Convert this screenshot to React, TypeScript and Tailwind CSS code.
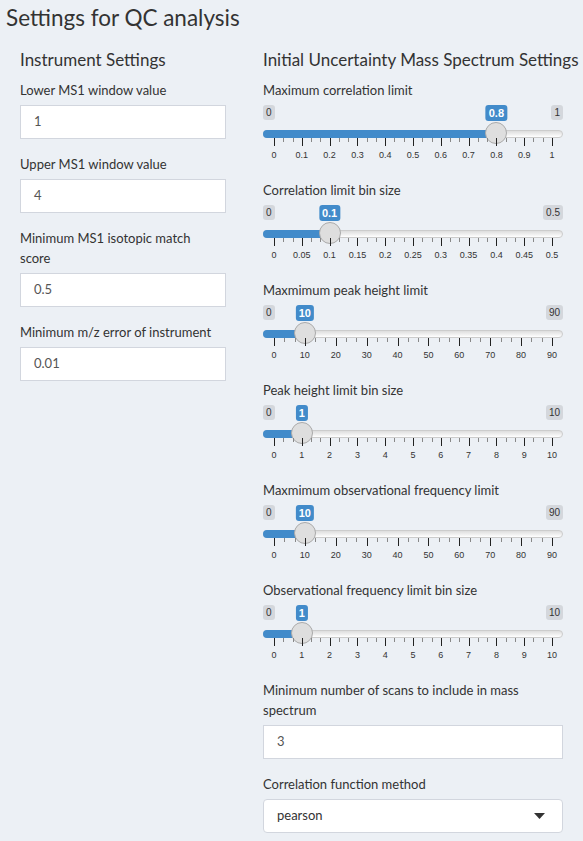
import React from "react";

interface SliderProps {
  label: string;
  min: number;
  max: number;
  value: number;
  ticks: string[];
}

const SliderInput: React.FC<SliderProps> = ({ label, min, max, value, ticks }) => {
  const frac = (value - min) / (max - min);
  const intervals = ticks.length - 1;
  const smalls: number[] = [];
  for (let i = 0; i < intervals; i++) {
    smalls.push((i + 1 / 3) / intervals);
    smalls.push((i + 2 / 3) / intervals);
  }

  return (
    <div className="mb-[15px]">
      <div className="text-[13px] leading-[20px] mb-[5px]">{label}</div>
      <div className="relative h-[60px] flex flex-col font-['Liberation_Sans',Arial,sans-serif]">
        {/* min / max labels */}
        <div className="flex justify-between text-[10px] leading-[13px] text-[#333]">
          <span className="px-[3px] py-[1px] rounded-[3px] bg-[rgba(0,0,0,0.1)]">{min}</span>
          <span className="px-[3px] py-[1px] rounded-[3px] bg-[rgba(0,0,0,0.1)]">{max}</span>
        </div>
        {/* track */}
        <div className="relative mt-[10px] h-[8px] rounded-full border border-[#ccc] bg-gradient-to-b from-[#ddd] to-white">
          <div
            className="absolute -left-px -top-px h-[8px] rounded-l-full bg-[#428bca]"
            style={{ width: 11 + frac * 278 }}
          />
          <div
            className="absolute -top-[9px] w-[22px] h-[22px] rounded-full border border-[#aaa] bg-[#dedede]"
            style={{ left: frac * 278 - 1 }}
          />
        </div>
        <span
          className="absolute top-0 -translate-x-1/2 px-[3px] py-[1px] text-[11px] leading-[14px] font-bold rounded-[3px] bg-[#428bca] text-white whitespace-nowrap"
          style={{ left: 11 + frac * 278 }}
        >
          {value}
        </span>
        {/* grid */}
        <div className="relative mx-[11px] mt-auto h-[27px]">
          {ticks.map((t, i) => (
            <React.Fragment key={t}>
              <div
                className="absolute top-0 w-px h-[8px] bg-[#222]"
                style={{ left: `${(i / intervals) * 100}%` }}
              />
              <span
                className="absolute bottom-[5px] -translate-x-1/2 text-[9px] leading-[9px] text-[#333] whitespace-nowrap"
                style={{ left: `${(i / intervals) * 100}%` }}
              >
                {t}
              </span>
            </React.Fragment>
          ))}
          {smalls.map((p) => (
            <div
              key={p}
              className="absolute top-0 w-px h-[4px] bg-[#888]"
              style={{ left: `${p * 100}%` }}
            />
          ))}
        </div>
      </div>
    </div>
  );
};

const TextInput: React.FC<{ label: React.ReactNode; value: string }> = ({ label, value }) => (
  <div className="mb-[15px]">
    <div className="text-[13px] leading-[20px] mb-[5px]">{label}</div>
    <div className="h-[34px] border border-[#d2d6de] bg-white px-[13px] flex items-center text-[13px] text-[#555]">
      {value}
    </div>
  </div>
);

const tenths = ["0", "0.1", "0.2", "0.3", "0.4", "0.5", "0.6", "0.7", "0.8", "0.9", "1"];
const halves = ["0", "0.05", "0.1", "0.15", "0.2", "0.25", "0.3", "0.35", "0.4", "0.45", "0.5"];
const ninety = ["0", "10", "20", "30", "40", "50", "60", "70", "80", "90"];
const ten = ["0", "1", "2", "3", "4", "5", "6", "7", "8", "9", "10"];

export default function App() {
  return (
    <div className="min-h-screen w-[583px] overflow-hidden bg-[#ecf0f5] text-[#333] font-['Lato','Open_Sans',sans-serif]">
      <h2 className="pl-[6px] pt-[5px] text-[22.5px] leading-[26px]">Settings for QC analysis</h2>
      <div className="flex pl-[20px] gap-[37px] mt-[19px]">
        <div className="w-[206px] shrink-0">
          <h4 className="text-[17px] leading-[20px] mb-[10px]">Instrument Settings</h4>
          <TextInput label="Lower MS1 window value" value="1" />
          <TextInput label="Upper MS1 window value" value="4" />
          <TextInput
            label={
              <>
                Minimum MS1 isotopic match
                <br />
                score
              </>
            }
            value="0.5"
          />
          <TextInput label="Minimum m/z error of instrument" value="0.01" />
        </div>
        <div className="w-[300px] shrink-0">
          <h4 className="text-[17px] leading-[20px] mb-[10px] whitespace-nowrap">
            Initial Uncertainty Mass Spectrum Settings
          </h4>
          <SliderInput label="Maximum correlation limit" min={0} max={1} value={0.8} ticks={tenths} />
          <SliderInput label="Correlation limit bin size" min={0} max={0.5} value={0.1} ticks={halves} />
          <SliderInput label="Maxmimum peak height limit" min={0} max={90} value={10} ticks={ninety} />
          <SliderInput label="Peak height limit bin size" min={0} max={10} value={1} ticks={ten} />
          <SliderInput label="Maxmimum observational frequency limit" min={0} max={90} value={10} ticks={ninety} />
          <SliderInput label="Observational frequency limit bin size" min={0} max={10} value={1} ticks={ten} />
          <TextInput
            label={
              <>
                Minimum number of scans to include in mass
                <br />
                spectrum
              </>
            }
            value="3"
          />
          <div className="mb-[15px]">
            <div className="text-[13px] leading-[20px] mb-[5px]">Correlation function method</div>
            <div className="h-[34px] rounded-[4px] border border-[#d2d6de] bg-white pl-[13px] pr-[17px] flex items-center justify-between text-[13px] text-[#333]">
              <span>pearson</span>
              <svg width="11" height="6" viewBox="0 0 11 6">
                <polygon points="0,0 11,0 5.5,6" fill="#333" />
              </svg>
            </div>
          </div>
        </div>
      </div>
    </div>
  );
}
